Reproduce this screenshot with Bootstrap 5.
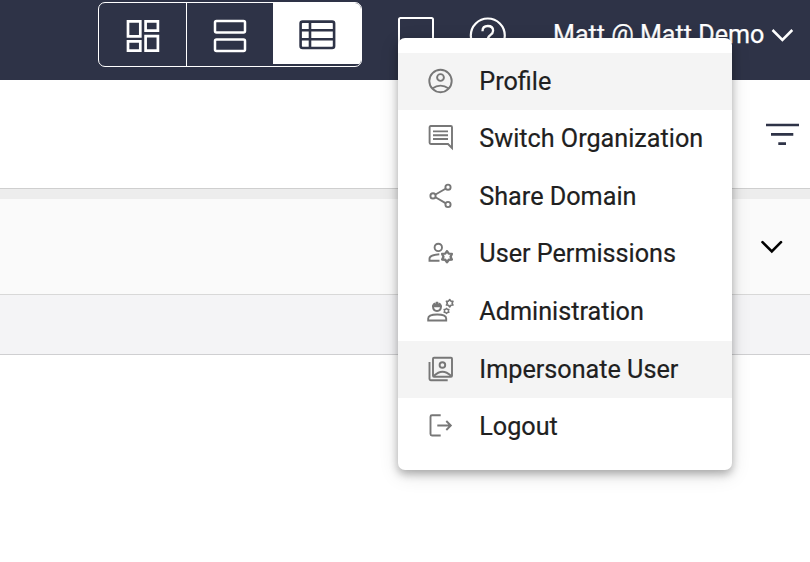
<!DOCTYPE html>
<html lang="en">
<head>
<meta charset="utf-8">
<meta name="viewport" content="width=device-width, initial-scale=1">
<title>Account menu</title>
<link href="https://cdn.jsdelivr.net/npm/bootstrap@5.3.0/dist/css/bootstrap.min.css" rel="stylesheet">
<style>
  body { font-family: Roboto, sans-serif; color: #202020; height: 562px; overflow: hidden; background: #fff; }
  svg { display: block; flex: none; fill: none; stroke: currentColor; }
  .topbar { height: 80px; background: #2e3347; padding: 2px 16px 0 98px; }
  .views { width: 264px; height: 65px; border: 1px solid #fff; border-radius: 7px; overflow: hidden; }
  .views .btn { border: 0; border-radius: 0; padding: 2px 0 0; color: #fff; width: 87px; flex: none; }
  .views .btn + .btn { border-left: 1px solid #fff; margin: 0; width: 87px; }
  .views .btn.active { background: #fff; color: #2e3347; height: 61px; padding: 3px 0 0; width: 88px; }
  .tools { height: 65px; }
  .message-icon { margin-left: 35px; }
  .help-icon { margin-left: 35px; }
  .account { margin-left: 46px; font-size: 25.1px; line-height: 30px; white-space: nowrap; -webkit-text-stroke: .25px currentColor; }
  .account span { width: 212px; }
  .account svg { margin-left: 5px; }
  .filterbar { height: 109px; border-bottom: 1px solid #cfcfcf; padding-right: 10px; color: #2e3347; }
  .gapbar { height: 10px; background: #ededed; }
  .panel-head { height: 96px; background: #fafafa; border-bottom: 1px solid #d8d8d8; padding-right: 26px; color: #000; }
  .panel-row { height: 60px; background: #f4f4f6; border-bottom: 1px solid #cfcfd1; }
  .account-menu { left: 398px; top: 38px; width: 334px; height: 432px; padding: 14.8px 0 14px; border: 0; border-radius: 7px; background: #fff;
    box-shadow: 0 4px 8px rgba(0,0,0,.28), 0 5px 20px rgba(0,0,0,.12); }
  .account-menu .dropdown-item { height: 57.6px; padding: 0 0 0 27px; font-size: 25.2px; line-height: 30px; color: #202020; -webkit-text-stroke: .2px currentColor; }
  .account-menu .shade { background: #f4f4f4; }
  .account-menu svg { color: #777; margin-right: 24.3px; stroke-width: 1.9; }
</style>
<script src="https://cdn.jsdelivr.net/npm/bootstrap@5.3.0/dist/js/bootstrap.bundle.min.js"></script>
</head>
<body class="position-relative">
<svg width="0" height="0" class="position-absolute">
  <symbol id="cog" viewBox="-6.5 -6.5 13 13">
    <path stroke-linejoin="round" d="M0-5.200L1.650-2.860 4.500-2.600 3.300 0 4.500 2.600 1.650 2.860 0 5.200-1.650 2.860-4.500 2.600-3.300 0-4.500-2.600-1.650-2.860z"/>
  </symbol>
</svg>
<header class="topbar d-flex align-items-start text-white">
  <div class="views d-flex">
    <button class="btn d-flex align-items-center justify-content-center" aria-label="Grid view">
      <svg width="34" height="34" stroke-width="2.7"><path d="M2 2.400h12.300v14.900H2zM19.600 2.400h12.300v9.300H19.600zM2 22.400h12.300v9.300H2zM19.600 17.200h12.300v14.500H19.600z"/></svg>
    </button>
    <button class="btn d-flex align-items-center justify-content-center" aria-label="Split view">
      <svg width="34" height="34" stroke-width="2.5"><rect x="2" y="2" width="30" height="11.500" rx="1.500"/><rect x="2" y="20.500" width="30" height="11.500" rx="1.500"/></svg>
    </button>
    <button class="btn active d-flex align-items-center justify-content-center" aria-label="List view">
      <svg width="38" height="30" stroke-width="2.6"><rect x="1.600" y="1.600" width="33.500" height="26.400" rx="2"/><path d="M2 10.200h33M2 19.200h33M11 2v26"/></svg>
    </button>
  </div>
  <div class="tools d-flex align-items-center">
    <svg class="message-icon" width="37" height="38" stroke-width="2"><path d="M2 36V3.500q0-1.500 1.500-1.500h31q1.500 0 1.500 1.500V36z"/></svg>
    <svg class="help-icon" width="38" height="38" stroke-width="2.200"><circle cx="18.800" cy="19.500" r="17"/><path d="M13.500 15.200q0-5.200 5.300-5.200t5.300 4.700q0 2.400-2.800 4.500t-2.600 5.300" stroke-width="2.300"/></svg>
    <div class="account d-flex align-items-center"><span>Matt @ Matt Demo</span>
      <svg width="24" height="16" stroke-width="2.500"><path d="M2.500 3l9.900 9.900L22.300 3"/></svg>
    </div>
  </div>
</header>
<main>
  <div class="filterbar d-flex align-items-center justify-content-end">
    <svg width="36" height="26" stroke-width="2.700"><path d="M2 4h33M7 13.400h22.300M14.300 22.700h7.700"/></svg>
  </div>
  <div class="gapbar"></div>
  <div class="panel-head d-flex align-items-center justify-content-end">
    <svg width="24" height="16" stroke-width="2.600" stroke-linecap="round"><path d="M2.500 3.200l9.300 9.200 9.200-9.200"/></svg>
  </div>
  <div class="panel-row"></div>
</main>
<nav class="account-menu position-absolute d-flex flex-column">
  <a class="dropdown-item shade d-flex align-items-center"><svg width="30" height="30"><circle cx="15.500" cy="14" r="11.200"/><circle cx="15.500" cy="10.500" r="3.400"/><path d="M7.200 21.600q8.300-6 16.600 0"/></svg><span>Profile</span></a>
  <a class="dropdown-item d-flex align-items-center"><svg width="30" height="30"><path d="M27 24l-4-4H5.800q-1.200 0-1.200-1.200V3.200Q4.600 2 5.800 2h20q1.200 0 1.200 1.200zM8 7.400h15M8 11.200h15M8 15h15"/></svg><span>Switch Organization</span></a>
  <a class="dropdown-item d-flex align-items-center"><svg width="30" height="30"><circle cx="8" cy="13.900" r="2.600"/><circle cx="23" cy="5.200" r="2.600"/><circle cx="23" cy="22.500" r="2.600"/><path d="M10.500 12.500l10-5.800M10.500 15.300l10 5.800"/></svg><span>Share Domain</span></a>
  <a class="dropdown-item d-flex align-items-center"><svg width="30" height="30"><circle cx="13.300" cy="8.400" r="3.700"/><path d="M14.500 21.700H4.500v-2.200q0-3.500 9.800-4.300"/><use href="#cog" x="15" y="10.700" width="14" height="14" stroke-width="2.200"/></svg><span>User Permissions</span></a>
  <a class="dropdown-item d-flex align-items-center"><svg width="30" height="30"><path d="M3.200 23.500v-2q0-4 9-4t9 4v2zM8 9q0 5 4 5t4-5"/><path d="M7 10.200V8.400q.8-2.600 3-3v1.800l.8-2.400h2.300l.8 2.400V5.400q2.200.4 3 3v1.800z" fill="currentColor" stroke="none"/><use href="#cog" x="20" y="1.500" width="9.400" height="9.400" stroke-width="2.200"/><use href="#cog" x="18" y="10.400" width="7" height="7" stroke-width="2.600"/></svg><span>Administration</span></a>
  <a class="dropdown-item shade d-flex align-items-center"><svg width="30" height="30"><rect x="8" y="2.800" width="19" height="19" rx="1"/><path d="M4.500 7v17q0 1.200 1.200 1.200h17M9 20.800q8.500-8.200 17 0"/><circle cx="17.400" cy="10" r="2.800"/></svg><span>Impersonate User</span></a>
  <a class="dropdown-item d-flex align-items-center"><svg width="30" height="30"><path d="M15.700 3.300H7q-1.500 0-1.500 1.500v17.200q0 1.500 1.500 1.500h8.700M12.300 13.500h13.200M21.300 9l4.500 4.500-4.500 4.500"/></svg><span>Logout</span></a>
</nav>
</body>
</html>
